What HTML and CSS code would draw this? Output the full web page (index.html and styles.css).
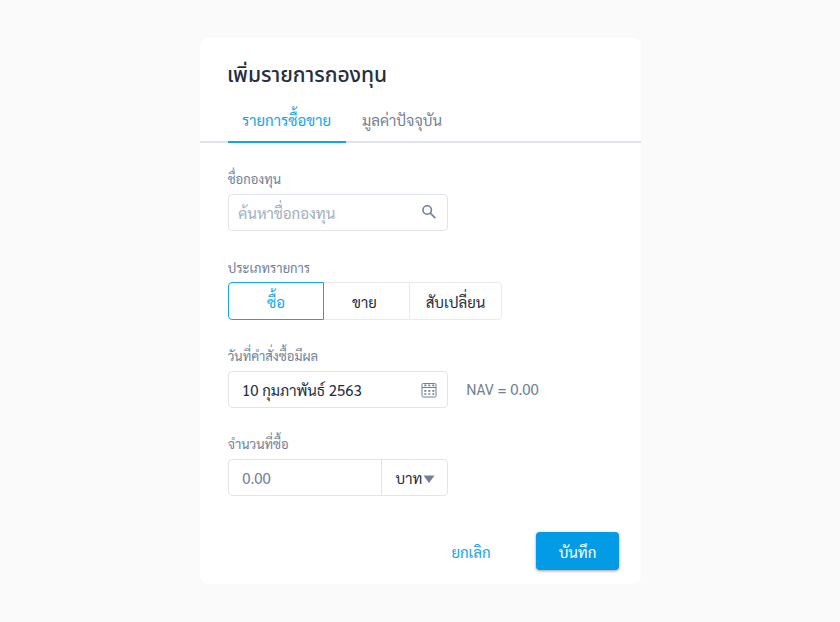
FILE: index.html
```html
<!DOCTYPE html>
<html lang="th">
<head>
<meta charset="utf-8">
<title>เพิ่มรายการกองทุน</title>
<link rel="stylesheet" href="styles.css">
</head>
<body>
<main class="dialog">
  <h1 class="title">เพิ่มรายการกองทุน</h1>
  <nav class="tabs">
    <a class="tab tab-active">รายการซื้อขาย</a>
    <a class="tab">มูลค่าปัจจุบัน</a>
  </nav>
  <form class="form">
    <section class="field">
      <label class="label">ชื่อกองทุน</label>
      <div class="box search"><span>ค้นหาชื่อกองทุน</span>
        <svg class="icon" viewBox="0 0 16 16"><circle cx="6.2" cy="6" r="4.2"/><path d="M9.3 9.1l5 5"/></svg>
      </div>
    </section>
    <section class="field">
      <label class="label">ประเภทรายการ</label>
      <div class="segments">
        <span class="segment segment-active">ซื้อ</span>
        <span class="segment segment-sell">ขาย</span>
        <span class="segment segment-switch">สับเปลี่ยน</span>
      </div>
    </section>
    <section class="field">
      <label class="label">วันที่คำสั่งซื้อมีผล</label>
      <div class="row">
        <div class="box date"><span>10 กุมภาพันธ์ 2563</span>
          <svg class="icon calendar" viewBox="0 0 16 16"><rect x="1" y="1.5" width="14" height="13.5" rx="1.2"/><path d="M1 5.5h14"/><path class="dots" d="M3.3 3.3h10M3.3 8.8h10M3.3 12h10"/></svg>
        </div>
        <span class="nav-value">NAV = 0.00</span>
      </div>
    </section>
    <section class="field">
      <label class="label">จำนวนที่ซื้อ</label>
      <div class="box amount"><span class="number">0.00</span><span class="unit">บาท<svg class="caret" viewBox="0 0 12 8"><path d="M.5 .5h11L6 8z"/></svg></span></div>
    </section>
  </form>
  <footer class="actions">
    <button class="cancel">ยกเลิก</button>
    <button class="save">บันทึก</button>
  </footer>
</main>
</body>
</html>
```
FILE: styles.css
```css
* { box-sizing: border-box; }
body { margin: 0; padding: 38px 0 0 200px; height: 622px; background: #fafafa; font: 15px/20px "Sarabun", "Liberation Sans", sans-serif; color: #242e42; }
.dialog { width: 441px; height: 546px; background: #fff; border-radius: 8px; }
.title { margin: 0; padding: 21px 27px 0; height: 62px; font: 500 21px/30px "Noto Sans", "Noto Sans Thai", sans-serif; }
.tabs { display: flex; height: 43px; padding-left: 28px; border-bottom: 2px solid #e2e3ea; }
.tab { height: 43px; width: 118px; padding-top: 10px; text-align: center; color: #718096; }
.tab-active { padding-right: 1px; color: #12a5ea; border-bottom: 2px solid #12a5ea; }
.tab + .tab { margin-left: -2px; width: 116px; }
.form { padding: 27.4px 28px 0; }
.field { height: 88.3px; }
.label { display: block; height: 23.6px; margin-left: -.3px; font-size: 13px; line-height: 18px; color: #718096; }
.box { width: 220px; height: 37px; display: flex; align-items: center; padding-top: 1px; border: 1px solid #e2e4eb; border-radius: 4px; }
.icon { width: 16px; height: 16px; margin: -1px 10px 0 auto; fill: none; stroke: #718096; stroke-width: 1.6; }
.calendar { margin-top: 0; stroke-width: 1; }
.dots { stroke-dasharray: 2 2; stroke-width: 1.7; }
.search { padding-left: 9.3px; color: #a0aec0; }
.date { padding-left: 13px; }
.row, .segments { display: flex; align-items: center; }
.segment { height: 38px; line-height: 37px; text-align: center; border: 1px solid #e9eaf0; }
.segment-active { width: 96px; color: #12a5ea; border-color: #12a5ea; border-radius: 4px 0 0 4px; }
.segment-sell { width: 85px; padding-right: 4px; border-left: 0; border-right: 0; }
.segment-switch { width: 93px; border-radius: 0 4px 4px 0; }
.nav-value { margin-left: 18.3px; color: #718096; }
.number { width: 152px; padding-left: 13.2px; color: #718096; }
.amount { padding-top: 0; }
.number { padding-top: 1px; }
.unit { display: flex; align-items: center; align-self: stretch; padding: 2px 0 0 13.5px; border-left: 1px solid #e2e4eb; }
.caret { width: 12px; height: 8px; margin: 2px 0 0 .5px; fill: #718096; }
.actions { display: flex; height: 38px; justify-content: flex-end; padding-right: 22px; margin-top: 8.3px; }
button { font: inherit; border: 0; background: none; padding: 2px 0 0; }
.cancel { width: 60px; margin-right: 35px; color: #12a5ea; }
.save { width: 83px; height: 38px; border-radius: 4px; color: #fff; background: #039be5; box-shadow: 0 1px 3px #0006; }
```
